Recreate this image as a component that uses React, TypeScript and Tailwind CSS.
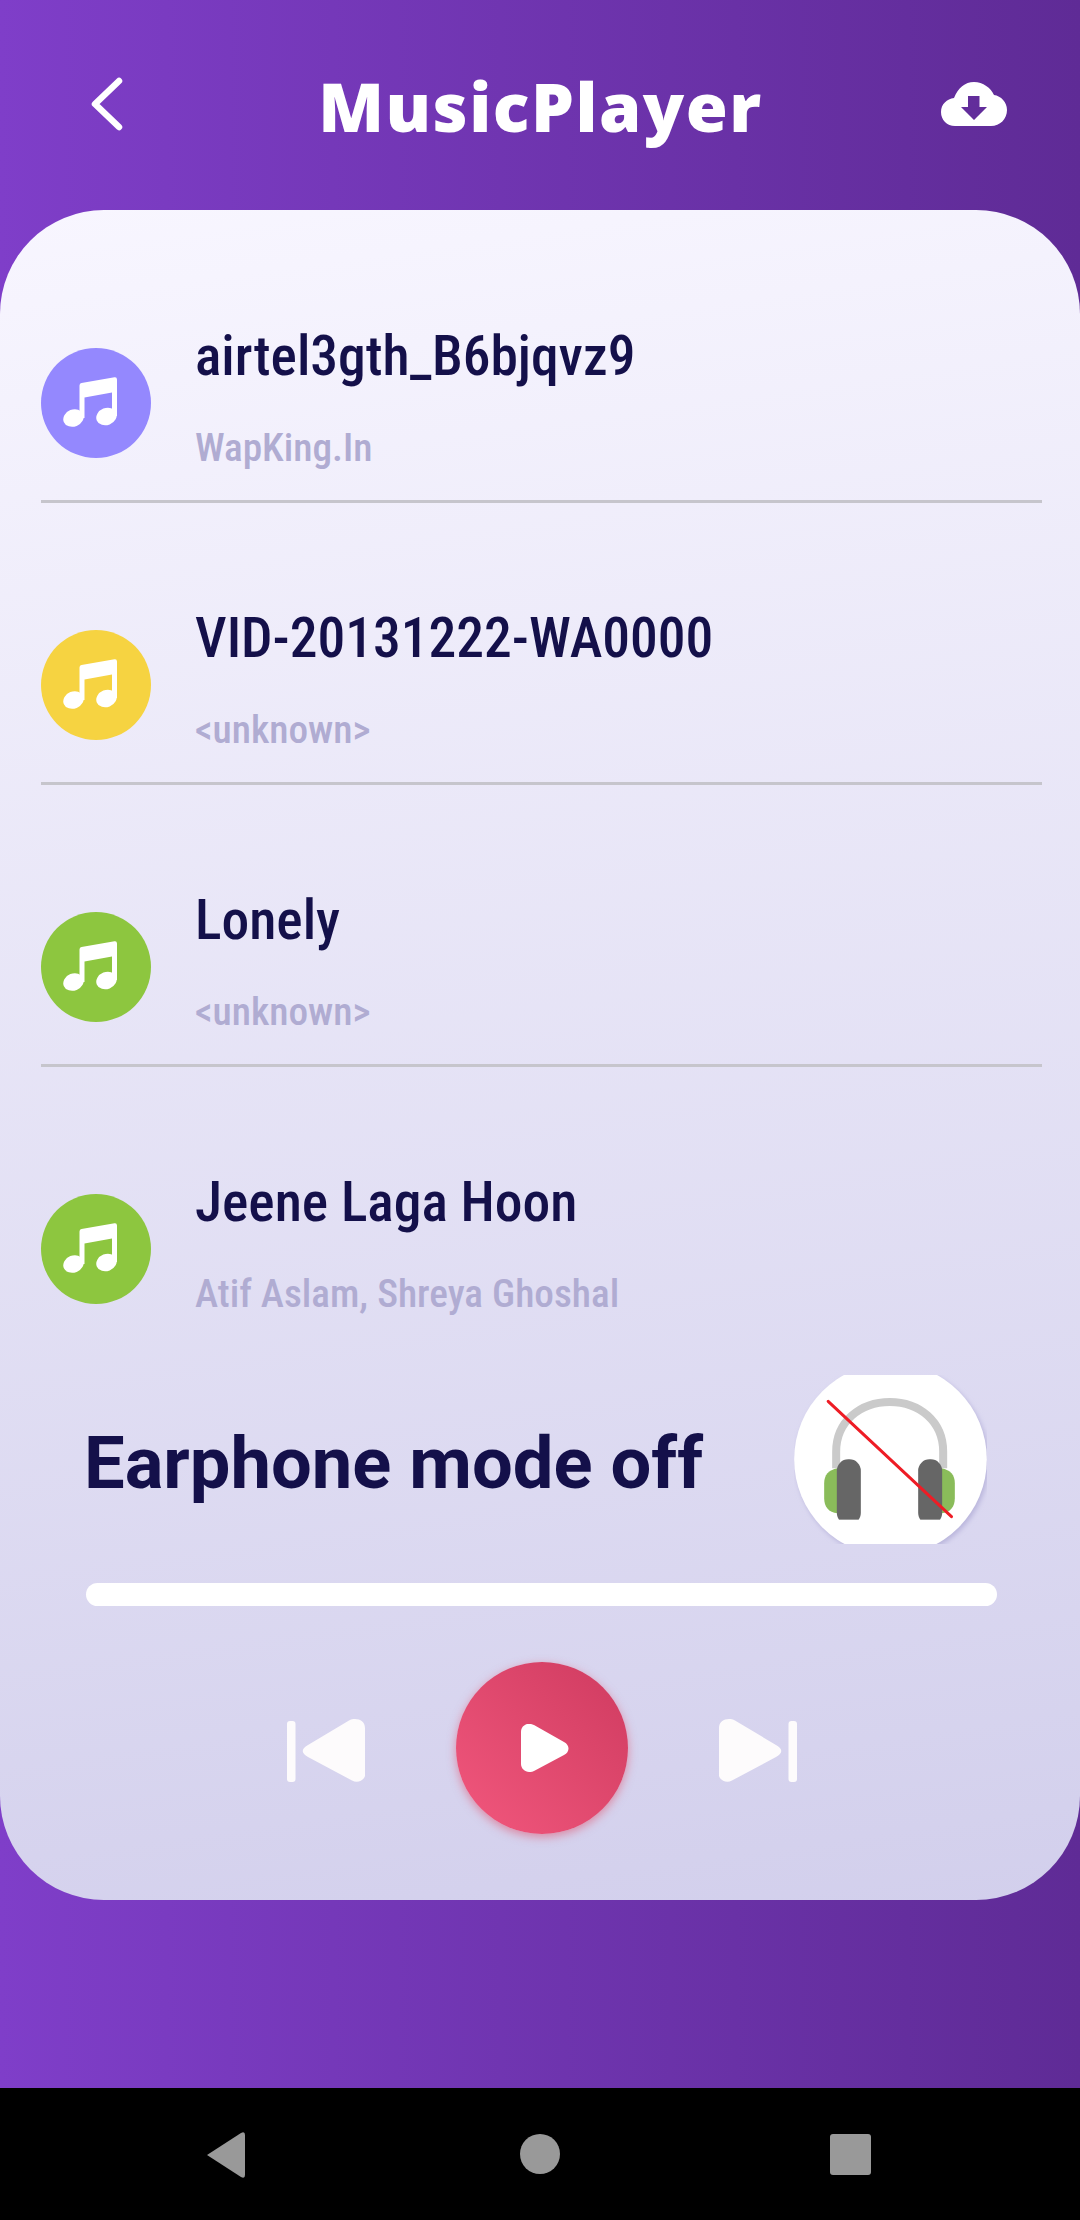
const songs = [
  { title: "airtel3gth_B6bjqvz9", artist: "WapKing.In", color: "bg-[#9488fe]" },
  { title: "VID-20131222-WA0000", artist: "<unknown>", color: "bg-[#f6d341]" },
  { title: "Lonely", artist: "<unknown>", color: "bg-[#8dc63f]" },
  { title: "Jeene Laga Hoon", artist: "Atif Aslam, Shreya Ghoshal", color: "bg-[#8dc63f]" },
];

function NoteIcon() {
  return (
    <svg width="54" height="50" viewBox="0 0 54 50" fill="white" className="mr-[12px] mb-[3px]">
      <path d="M16.5 8.5Q16.5 6.3 18.500 6L51.500 0.300Q54 0 54 2.500V39H49V15.500L21.500 20.500V41H16.500Z" />
      <ellipse cx="10.500" cy="41" rx="10.500" ry="8.500" transform="rotate(-22 10.5 41)" />
      <ellipse cx="43.500" cy="39.500" rx="10.500" ry="8.500" transform="rotate(-22 43.5 39.5)" />
    </svg>
  );
}

function SongRow({ song, last }: { song: (typeof songs)[number]; last: boolean }) {
  return (
    <div className={`mr-[38px] ml-[41px] flex h-[282px] ${last ? "" : "border-b-[3px] border-[#c6c5cc]"}`}>
      <div className={`mt-[127px] flex h-[110px] w-[110px] shrink-0 items-center justify-center rounded-full ${song.color}`}>
        <NoteIcon />
      </div>
      <div className="ml-[44px] pt-[105px] font-['Roboto',sans-serif] [font-stretch:75%]">
        <div className="h-[97px] text-[55.500px] leading-[62px] font-medium text-[#14104a]">{song.title}</div>
        <div className="text-[39.300px] leading-[50px] font-medium text-[#b0acd2]">{song.artist}</div>
      </div>
    </div>
  );
}

function HeadphonesOff() {
  return (
    <svg width="193" height="169" viewBox="102 105 578 507">
      <defs>
        <filter id="soft" x="-20%" y="-20%" width="140%" height="140%">
          <feGaussianBlur stdDeviation="8" />
        </filter>
      </defs>
      <circle cx="397" cy="366" r="289" fill="#b9b5dc" filter="url(#soft)" />
      <circle cx="391" cy="358" r="289" fill="white" />
      <path d="M228 385V335C228 245 300 186 389 186C478 186 549 245 549 335V385" fill="none" stroke="#cacaca" strokeWidth="24" />
      <path d="M232 385C205 390 192 405 192 430V475C192 500 205 518 232 520Z" fill="#8abc5a" />
      <path d="M544 385C571 390 584 405 584 430V475C584 500 571 518 544 520Z" fill="#8abc5a" />
      <rect x="230" y="358" width="72" height="195" rx="34" fill="#666666" />
      <rect x="474" y="358" width="72" height="195" rx="34" fill="#666666" />
      <rect x="230" y="539" width="72" height="20" fill="white" />
      <rect x="474" y="539" width="72" height="20" fill="white" />
      <path d="M204 184L574 530" stroke="#ee1c25" strokeWidth="9" strokeLinecap="round" />
    </svg>
  );
}

function SkipIcon({ flip }: { flip?: boolean }) {
  return (
    <svg width="78" height="64" viewBox="0 0 78 64" fill="#fdfbfc" className={`mt-[3px] ${flip ? "-scale-x-100" : ""}`}>
      <rect x="0" y="3" width="8.500" height="61" rx="3" />
      <path d="M21 27L62 2.500C69 -1 78 2 78 10L78.500 55C78.500 62 71 66 65 62.500L21 39C14 35 14 31 21 27Z" />
    </svg>
  );
}

export default function App() {
  return (
    <div className="flex h-[2220px] w-[1080px] flex-col overflow-hidden bg-black">
      <div className="flex h-[2088px] flex-col bg-gradient-to-r from-[#7f3ec9] to-[#5f2b96]">
        {/* Header */}
        <header className="flex h-[210px] shrink-0 items-start justify-between pt-[76px] pr-[73px] pl-[90px]">
          <svg width="34" height="56" viewBox="0 0 34 56" fill="none" stroke="white" strokeWidth="6.500" strokeLinecap="round" strokeLinejoin="round">
            <path d="M29 5L5 28L29 51" />
          </svg>
          <h1 className="mt-[-10px] ml-[16px] font-['Open_Sans',sans-serif] text-[68px] leading-[80px] font-extrabold tracking-[1.500px] text-white">MusicPlayer</h1>
          <svg width="66" height="44" viewBox="0 0 66 44" className="mt-[6px]">
            <path
              fillRule="evenodd"
              fill="white"
              d="M14 44C6 44 0 38 0 30C0 22 6 17 13 16C17 6 24 0 33 0C42 0 50 6 53 13C60 14 66 20 66 28C66 37 59 44 50 44ZM27 14V25H20L33 38L46 25H38.500V14Z"
            />
          </svg>
        </header>

        {/* Card */}
        <main className="flex h-[1690px] shrink-0 flex-col rounded-[104px] bg-[linear-gradient(172deg,#f8f6ff,#d2cfec)] pt-[11px]">
          {songs.map((song, i) => (
            <SongRow key={song.title} song={song} last={i === songs.length - 1} />
          ))}

          <div className="mt-[26px] flex h-[169px] items-center justify-between pr-[93px] pl-[84px]">
            <span className="pt-[9px] font-['Roboto',sans-serif] text-[72.300px] font-bold text-[#14104a]">Earphone mode off</span>
            <HeadphonesOff />
          </div>

          <div className="mt-[39px] mr-[83px] ml-[86px] h-[23px] rounded-full bg-white" />

          <div className="mt-[56px] flex items-center justify-center gap-[91px] pl-[4px]">
            <SkipIcon />
            <button className="flex h-[172px] w-[172px] items-center justify-center rounded-full bg-gradient-to-bl from-[#cf3b60] to-[#f2577d] shadow-[0_3px_10px_rgba(226,75,100,0.55)]">
              <svg width="48" height="48" viewBox="0 0 48 48" fill="white" className="ml-[5px]">
                <path d="M0 8C0 1 7 -2 13 1L43 18C49 21 49 28 43 31L13 47C7 50 0 46 0 40Z" />
              </svg>
            </button>
            <SkipIcon flip />
          </div>
        </main>
      </div>

      {/* Android nav bar */}
      <nav className="flex h-[132px] items-start pt-[44px] pl-[207px]">
        <svg width="38" height="46" viewBox="0 0 38 46" fill="#999999">
          <path d="M0 23L34 1Q38 -1 38 3V43Q38 47 34 45Z" />
        </svg>
        <div className="mt-[2px] ml-[275px] h-[40px] w-[40px] rounded-full bg-[#999999]" />
        <div className="mt-[2px] ml-[270px] h-[41px] w-[41px] rounded-[3px] bg-[#999999]" />
      </nav>
    </div>
  );
}
